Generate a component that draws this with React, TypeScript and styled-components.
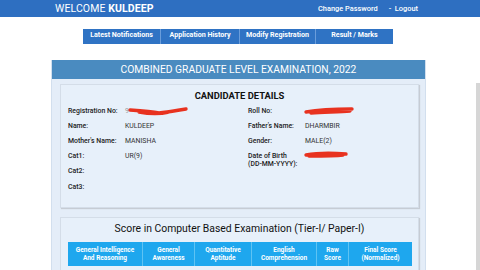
import React from "react";
import styled, { createGlobalStyle } from "styled-components";

const Global = createGlobalStyle`
  html, body { margin: 0; padding: 0; background: #ffffff; }
  body { font-family: Roboto, "Liberation Sans", sans-serif; width: 480px; height: 270px; overflow: hidden; }
`;

const Page = styled.div`
  position: relative;
  width: 480px;
  height: 270px;
  overflow: hidden;
`;

const TopBar = styled.header`
  height: 17px;
  background: #2e6fc1;
  color: #fff;
  display: flex;
  align-items: center;
  justify-content: space-between;
  padding: 0 62px 0 55px;
`;

const Welcome = styled.div`
  font-size: 10.5px;
  letter-spacing: 0.1px;
  b { font-weight: 700; }
`;

const TopLinks = styled.div`
  display: flex;
  gap: 11px;
  font-size: 7.4px;
  font-weight: 500;
`;

const Nav = styled.nav`
  display: flex;
  margin: 12px 0 0 83px;
  width: 310px;
`;

const Tab = styled.div<{ $w: number }>`
  width: ${(p) => p.$w}px;
  height: 15px;
  background: #2f73c4;
  border-right: 1px solid #6a9ddb;
  color: #fff;
  font-size: 7.1px;
  font-weight: 700;
  text-align: center;
  padding-top: 0.5px;
  box-sizing: border-box;
  &:last-child { border-right: none; }
`;

const Panel = styled.section`
  margin: 16px 0 0 51px;
  width: 375px;
  background: #e4edf8;
  border: 1px solid #d2dfee;
  border-top: none;
  box-sizing: border-box;
  padding-bottom: 10px;
`;

const PanelHead = styled.div`
  height: 19px;
  background: #4a8bc0;
  color: #fff;
  font-size: 10.3px;
  display: flex;
  align-items: center;
  justify-content: center;
`;

const Card = styled.div<{ $top: number; $pt: number; $pb: number }>`
  margin: ${(p) => p.$top}px 6px 0 8px;
  background: #e7f0fa;
  border: 1px solid #d4dde8;
  box-shadow: 1px 1px 1px #c6ccd4;
  padding: ${(p) => p.$pt}px 7px ${(p) => p.$pb}px 7px;
`;

const CardTitle = styled.div<{ $bold?: boolean }>`
  text-align: center;
  font-size: ${(p) => (p.$bold ? "9.4px" : "10.4px")};
  font-weight: ${(p) => (p.$bold ? 700 : 400)};
  color: #111;
  margin-bottom: ${(p) => (p.$bold ? "2px" : "7px")};
`;

const Details = styled.div`
  display: grid;
  grid-template-columns: 57px 123px 57px 1fr;
  grid-auto-rows: 15.2px;
  font-size: 6.9px;
  color: #222;
`;

const Label = styled.div`
  font-weight: 500;
  display: flex;
  align-items: center;
  white-space: nowrap;
`;

const Value = styled.div<{ $top?: boolean }>`
  display: flex;
  align-items: ${(p) => (p.$top ? "flex-start" : "center")};
  padding-top: ${(p) => (p.$top ? "2px" : "0")};
  color: #333;
`;

const TwoLine = styled.div`
  font-weight: 500;
  line-height: 8px;
  padding-top: 3px;
  white-space: nowrap;
`;

const Scribble = styled.svg`
  display: block;
  overflow: visible;
`;

const Table = styled.div`
  display: grid;
  grid-template-columns: 75px 52px 57px 65px 32px 63px;
`;

const Th = styled.div`
  background: #1ea7ee;
  color: #fff;
  font-size: 6.5px;
  font-weight: 700;
  line-height: 8px;
  text-align: center;
  height: 24px;
  display: flex;
  align-items: center;
  justify-content: center;
  white-space: pre-line;
  border-right: 1px solid #5ec3f3;
  &:last-child { border-right: none; }
`;

const SideBar = styled.div`
  position: absolute;
  right: 0;
  top: 83px;
  width: 4px;
  height: 187px;
  background: #d6d6d6;
`;

const Faint = styled.span`
  color: #999;
`;

const Red = ({ w, d }: { w: number; d: string }) => (
  <Scribble width={w} height={8} viewBox={`0 0 ${w} 8`}>
    <path d={d} stroke="#e8321f" strokeWidth={3.4} fill="none" strokeLinecap="round" />
  </Scribble>
);

const tabs: [string, number][] = [
  ["Latest Notifications", 78],
  ["Application History", 79],
  ["Modify Registration", 76],
  ["Result / Marks", 77],
];

const heads = [
  "General Intelligence\nAnd Reasoning",
  "General\nAwareness",
  "Quantitative\nAptitude",
  "English\nComprehension",
  "Raw\nScore",
  "Final Score\n(Normalized)",
];

export default function App() {
  return (
    <Page>
      <Global />
      <TopBar>
        <Welcome>
          WELCOME <b>KULDEEP</b>
        </Welcome>
        <TopLinks>
          <span>Change Password</span>
          <span>-&nbsp;&nbsp;Logout</span>
        </TopLinks>
      </TopBar>
      <Nav>
        {tabs.map(([t, w]) => (
          <Tab key={t} $w={w}>
            {t}
          </Tab>
        ))}
      </Nav>
      <Panel>
        <PanelHead>COMBINED GRADUATE LEVEL EXAMINATION, 2022</PanelHead>
        <Card $top={5} $pt={5} $pb={13}>
          <CardTitle $bold>CANDIDATE DETAILS</CardTitle>
          <Details>
            <Label>Registration No:</Label>
            <Value>
              <Faint>9</Faint>
              <Red w={58} d="M1 3 C15 4 25 5 30 6 C40 5 50 3 57 2 M10 5 C20 7 32 7 40 5" />
            </Value>
            <Label>Roll No:</Label>
            <Value>
              <Red w={48} d="M1 5 C12 3 30 2 47 2 M6 6 C20 5 35 5 45 4" />
            </Value>
            <Label>Name:</Label>
            <Value>KULDEEP</Value>
            <Label>Father's Name:</Label>
            <Value>DHARMBIR</Value>
            <Label>Mother's Name:</Label>
            <Value>MANISHA</Value>
            <Label>Gender:</Label>
            <Value>MALE(2)</Value>
            <Label>Cat1:</Label>
            <Value>UR(9)</Value>
            <TwoLine>
              Date of Birth
              <br />
              (DD-MM-YYYY):
            </TwoLine>
            <Value $top>
              <Red w={42} d="M1 4 C12 2 28 2 41 3 M4 5 C18 5 30 5 38 4" />
            </Value>
            <Label>Cat2:</Label>
            <Value />
            <Label />
            <Value />
            <Label>Cat3:</Label>
            <Value />
            <Label />
            <Value />
          </Details>
        </Card>
        <Card $top={9} $pt={4} $pb={6}>
          <CardTitle>Score in Computer Based Examination (Tier-I/ Paper-I)</CardTitle>
          <Table>
            {heads.map((h) => (
              <Th key={h}>{h}</Th>
            ))}
          </Table>
        </Card>
      </Panel>
      <SideBar />
    </Page>
  );
}
